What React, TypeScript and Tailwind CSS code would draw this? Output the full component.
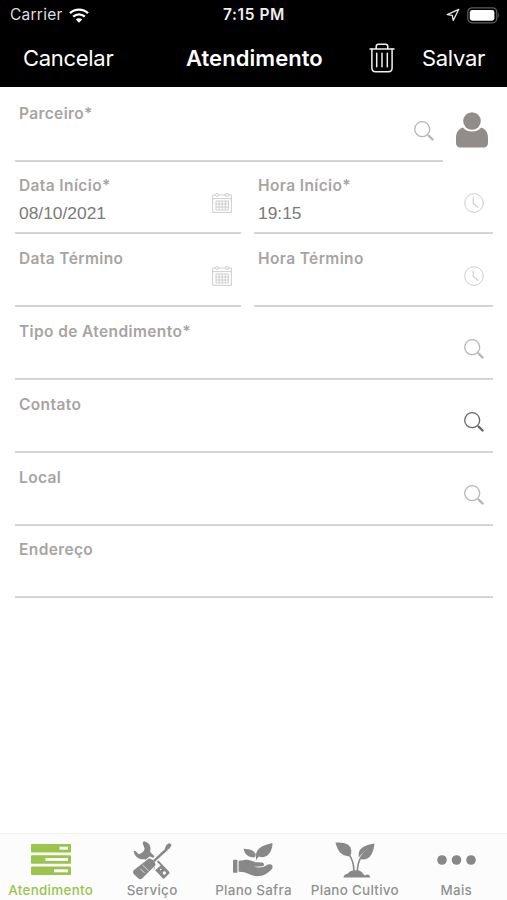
import type { ReactNode } from 'react'

const WifiIcon = () => (
  <svg width="20" height="15" viewBox="0 0 20 15" fill="none" stroke="white">
    <path d="M1 5.2C6 .4 14 .4 19 5.2" strokeWidth="2.4" />
    <path d="M4.2 8.6c3.3-3 8.3-3 11.6 0" strokeWidth="2.4" />
    <path d="M10 14.7 6.8 11.4c1.8-1.7 4.6-1.7 6.4 0z" fill="white" stroke="none" />
  </svg>
)

const LocationIcon = () => (
  <svg width="14" height="14" viewBox="0 0 14 14" fill="none" stroke="#e8e8e8" strokeWidth="1.3" strokeLinejoin="round">
    <path d="M12.800 1.300 1.200 6.600l5.100.7.9 5.200z" />
  </svg>
)

const BatteryIcon = () => (
  <svg width="33" height="17" viewBox="0 0 33 17">
    <rect x=".8" y=".8" width="29" height="15" rx="4.2" fill="none" stroke="#5c5c5c" strokeWidth="1.3" />
    <rect x="2.8" y="2.9" width="24.6" height="10.800" rx="2.4" fill="white" />
    <path d="M31.3 5.8c1.3.8 1.3 4.2 0 5z" fill="#5c5c5c" />
  </svg>
)

const TrashIcon = () => (
  <svg width="26" height="30" viewBox="0 0 26 30" fill="none" stroke="#f0f0f0" strokeWidth="1.5" strokeLinecap="round">
    <path d="M1 6h24M7.2 6V3.6C7.2 2 8 1.2 9.4 1.2h7.2c1.4 0 2.2.8 2.2 2.4V6" />
    <path d="M2.9 6v19c0 2.4 1.2 3.7 3.6 3.7h13c2.4 0 3.600-1.300 3.600-3.700V6" />
    <path d="M7.700 10.300v13.400M13 10.300v13.400M18.300 10.300v13.400" />
  </svg>
)

const SearchIcon = ({ className = 'text-[#b8b6b4]' }: { className?: string }) => (
  <svg width="20" height="20" viewBox="0 0 20 20" fill="none" stroke="currentColor" className={className}>
    <circle cx="8.2" cy="8.2" r="7.5" strokeWidth="1.3" />
    <path d="m13.600 13.600 1.600 1.600" strokeWidth="1.4" />
    <path d="m15.100 15.100 3.500 3.400" strokeWidth="2.4" strokeLinecap="round" />
  </svg>
)

const CalendarIcon = () => (
  <svg width="20" height="20" viewBox="0 0 20 20" fill="none" stroke="#cbc9c8" strokeWidth=".9">
    <path d="M3.5 2H.6v17.4h18.8V2h-2.9M6.5 2h7M.6 5.6h18.8" />
    <circle cx="5" cy="2" r="1.5" />
    <circle cx="15" cy="2" r="1.5" />
    <path d="M4 8h12.4v9H4zM4 11h12.4M4 14h12.4M7.1 8v9M10.2 8v9M13.3 8v9" />
  </svg>
)

const ClockIcon = () => (
  <svg width="20" height="20" viewBox="0 0 20 20" fill="none" stroke="#cfcdcb" strokeWidth="1">
    <circle cx="10" cy="10" r="9.3" />
    <path d="M9.2 4.6v5.6l5 4.4" strokeWidth="1.1" />
  </svg>
)

const PersonIcon = () => (
  <svg width="32" height="36" viewBox="0 0 32 36" fill="#928d8a">
    <circle cx="16" cy="9" r="8.8" />
    <path d="M6.9 15.6C2.4 17 0 20.600 0 26v4.500C0 34 1.500 35.500 5 35.500h22c3.500 0 5-1.500 5-5V26c0-5.400-2.400-9-6.900-10.400C23.200 18.200 20 19.500 16 19.500s-7.200-1.300-9.100-3.900z" />
  </svg>
)

const TasksIcon = () => (
  <svg width="40" height="31" viewBox="0 0 40 31">
    <g fill="#9bc44c">
      <rect width="40" height="8.400" rx="1" />
      <rect y="11.300" width="40" height="8.400" rx="1" />
      <rect y="22.600" width="40" height="8.400" rx="1" />
    </g>
    <g fill="#fcfcfc">
      <rect x="28.500" y="2.700" width="8.500" height="3" />
      <rect x="14.300" y="14" width="22.700" height="3" />
      <rect x="23" y="25.300" width="14" height="3" />
    </g>
  </svg>
)

const ToolsIcon = () => (
  <svg width="40" height="40" viewBox="0 0 40 40">
    <path d="M12.300 1.200C18 2.600 19.500 7.500 18 11.800L37 31.400c.8.900.8 1.500 0 2.300l-4.200 4.200c-.8.800-1.500.8-2.300 0L12.800 19.200C8.300 19.900 3 17.600 1.600 11.400c1.200-1 2.500-.3 3.400 1l1.600 1.800c2.900-.4 5.300-2.500 6-5.400L11.300 5c-1-1.500-.6-3.400 1-3.800z" fill="#888" />
    <path d="M36.800 6.600 20.500 22.200" stroke="#fcfcfc" strokeWidth="5.500" />
    <path d="M17.500 16.500c3.500.5 6.500 3.200 7.500 7.200L17 34 7 25z" fill="#fcfcfc" />
    <path d="m23.500 20.500 5.200 5-6.500 5.500z" fill="#fcfcfc" />
    <path d="M21.800 21.200 35 9" stroke="#888" strokeWidth="2.500" />
    <path d="m32.700 9.300 1.500-4.200 3.200-2.200 2.200 2.200-2 3.300-4 2z" fill="#888" />
    <path d="M16.700 18.400c3.600.2 6.300 2.700 7 6.700L10.300 38.200c-1.500 1.300-3 1.200-4.400-.1L2 34.300c-1.300-1.400-1.300-2.900 0-4.300z" fill="#888" />
    <path d="m10.500 25 6 5.800M8.300 28.700l4.300 4.300" stroke="#fcfcfc" strokeWidth=".7" />
    <circle cx="32.300" cy="33" r="1.700" fill="#fcfcfc" />
    <circle cx="28.700" cy="29.500" r=".8" fill="#fcfcfc" />
  </svg>
)

const HandPlantIcon = () => (
  <svg width="40" height="34" viewBox="0 0 40 34" fill="#888">
    <path d="M23.700 14.800c-2.500-8.300 4.500-12.300 15.800-14.800 0 8-4.700 16.500-13.800 13.600l-1 1.500z" />
    <path d="M22 14.300c-7 .3-10.500-3-11.300-8.600 7.200.3 12 2.200 11.800 7.300z" />
    <path d="M22.200 10.500c1 2.200 1 4 .6 6h1.400c.2-2.300.1-4-.4-6z" />
    <rect y="16.700" width="4.400" height="13" rx=".5" />
    <path d="M5.600 17.800c4.400-.3 6.500-1.300 10-.8 3.500.4 5 2.200 8.500 2.300l5 .2c2.400.3 2.500 3.300.2 3.800l-8.500.5c3.500 1 7.500.9 10.500-.2 2-1 3.200-2.700 5.600-2.400 3.300.5 3.500 3.100 1.500 5.300-4 4.200-8.400 6.700-14 6.700-6.800 0-10-4.700-18.800-4.500z" />
  </svg>
)

const SproutIcon = () => (
  <svg width="40" height="36" viewBox="0 0 40 36" fill="#888">
    <path d="M.5.800C9-.2 16.200 2.500 16.300 9c0 1.800-.3 3.300-1 4.800l-1.500.4C5.600 14.200 2.700 8 .5.800z" />
    <path d="M39.500 1.500c-1 7.500-3 16-11.500 15.900-1.100 0-2-.2-2.900-.6 2.700-5.100 6-8.600 10.800-12-5 2.700-9 6.200-12 10.600-1.500-8.500 4-12.200 15.600-13.900z" />
    <path d="M13.800 12.500c3.300 3.800 5 9 5.200 17M35.500 5C27 11.500 22.800 18 22.300 29" fill="none" stroke="#888" strokeWidth="1.600" />
    <path d="M8.500 35.500c0-2.500 2.200-3.600 4.500-4 2-2.500 5-3.600 8-3 2.700-.8 5.500.5 6.900 3.300l2.200 1.600c2.200-1.800 4.900-.6 5.100 2.100z" />
  </svg>
)

const DotsIcon = () => (
  <svg width="39" height="10" viewBox="0 0 39 10" fill="#888">
    <circle cx="5" cy="5" r="4.800" />
    <circle cx="19.500" cy="5" r="4.800" />
    <circle cx="34" cy="5" r="4.800" />
  </svg>
)

type FieldProps = {
  label: string
  value?: string
  icon?: ReactNode
}

const Field = ({ label, value, icon }: FieldProps) => (
  <div className="flex h-full min-w-0 flex-1 items-end justify-between border-b-2 border-[#d5d5d5] pl-1">
    <div className="h-[56px] whitespace-nowrap">
      <p className="text-[15.5px] leading-[20px] font-semibold tracking-[0.38px] text-[#a8a4a1]">{label}</p>
      {value && (
        <p className="mt-[7px] font-['Liberation_Sans',sans-serif] text-[17.4px] leading-[20px] text-[#7d7977]">{value}</p>
      )}
    </div>
    <div className="pr-[9.5px] pb-[19px]">{icon}</div>
  </div>
)

const Row = ({ children }: { children: ReactNode }) => (
  <div className="flex h-[72.78px] shrink-0 gap-[13px]">{children}</div>
)

const tabs = [
  { name: 'Atendimento', icon: <TasksIcon />, color: 'text-[#9bc44c]' },
  { name: 'Serviço', icon: <ToolsIcon />, color: 'text-[#919191]' },
  { name: 'Plano Safra', icon: <HandPlantIcon />, color: 'text-[#919191]' },
  { name: 'Plano Cultivo', icon: <SproutIcon />, color: 'text-[#919191]' },
  { name: 'Mais', icon: <DotsIcon />, color: 'text-[#919191]' },
]

export default function App() {
  return (
    <div className="flex h-[900px] w-[507px] flex-col overflow-hidden bg-white font-['Inter',sans-serif]">
      <header className="h-[87px] shrink-0 bg-black text-white">
        <div className="grid h-[30px] grid-cols-3 items-center pr-[7px] pl-[10px] text-[15.5px] leading-none">
          <div className="flex items-center gap-[6px]">
            <span className="tracking-[0.25px] text-[#dedede]">Carrier</span>
            <WifiIcon />
          </div>
          <span className="pr-[2px] text-center font-semibold tracking-[0.6px] text-[#eee]">7:15 PM</span>
          <div className="flex items-center justify-end gap-[7px]">
            <LocationIcon />
            <BatteryIcon />
          </div>
        </div>
        <div className="flex h-[55px] items-center pr-[22px] pl-[23px] text-[22px] leading-none">
          <span className="w-[163px] tracking-[-0.3px]">Cancelar</span>
          <h1 className="w-[182.5px] text-[22px] font-semibold tracking-[0.05px]">Atendimento</h1>
          <TrashIcon />
          <span className="ml-auto tracking-[-0.3px]">Salvar</span>
        </div>
      </header>

      <main className="flex flex-1 flex-col pt-[1.95px] pr-[14px] pl-[15px]">
        <Row>
          <Field label="Parceiro*" icon={<SearchIcon />} />
          <div className="flex w-[37px] items-end pb-[14px]">
            <PersonIcon />
          </div>
        </Row>
        <Row>
          <div className="flex w-[226px]">
            <Field label="Data Início*" value="08/10/2021" icon={<CalendarIcon />} />
          </div>
          <Field label="Hora Início*" value="19:15" icon={<ClockIcon />} />
        </Row>
        <Row>
          <div className="flex w-[226px]">
            <Field label="Data Término" icon={<CalendarIcon />} />
          </div>
          <Field label="Hora Término" icon={<ClockIcon />} />
        </Row>
        <Row>
          <Field label="Tipo de Atendimento*" icon={<SearchIcon />} />
        </Row>
        <Row>
          <Field label="Contato" icon={<SearchIcon className="text-[#6b6764]" />} />
        </Row>
        <Row>
          <Field label="Local" icon={<SearchIcon />} />
        </Row>
        <Row>
          <Field label="Endereço" />
        </Row>
      </main>

      <nav className="grid h-[67px] shrink-0 grid-cols-5 border-t border-[#f0f0f0] bg-[#fcfcfc]">
        {tabs.map((tab) => (
          <div key={tab.name} className={`flex flex-col items-center ${tab.color}`}>
            <div className="flex h-[51px] items-center">{tab.icon}</div>
            <span className="-mt-[2px] text-[13.4px] leading-[14px] font-medium tracking-[0.3px] whitespace-nowrap">{tab.name}</span>
          </div>
        ))}
      </nav>
    </div>
  )
}
